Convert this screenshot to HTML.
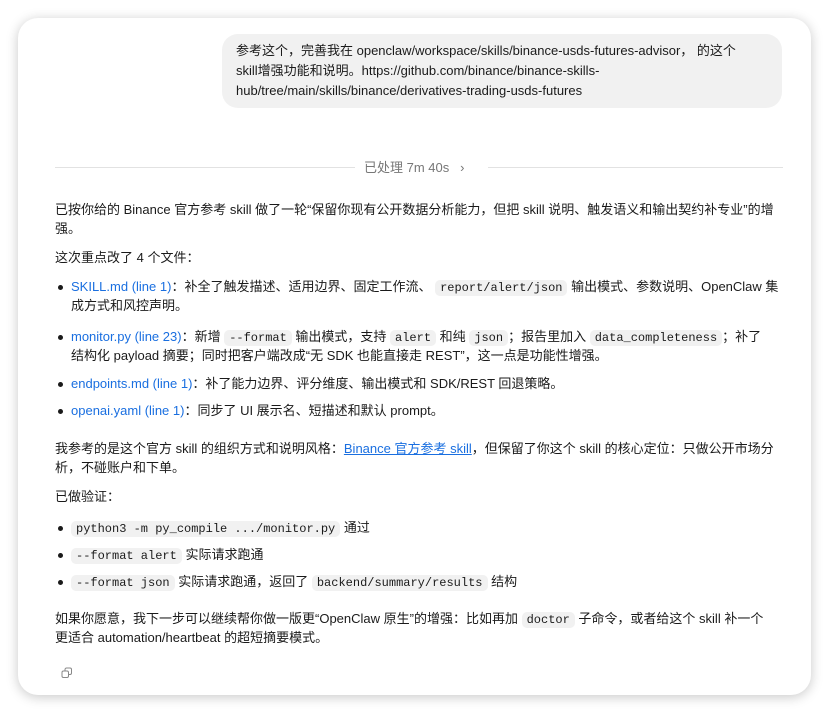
<!DOCTYPE html>
<html><head><meta charset="utf-8"><style>
body{margin:0;width:829px;height:713px;background:#fff;font-family:"Liberation Sans","Noto Sans CJK SC",sans-serif;color:#1a1a1a;font-size:13px;overflow:hidden}
.card{position:absolute;left:18px;top:18px;width:793px;height:677px;border-radius:20px;background:#fff;box-shadow:0 2px 12px rgba(0,0,0,.22)}
.bub{position:absolute;left:222px;top:34px;width:560px;height:74px;border-radius:16px;background:#f1f1f1}
.t{position:absolute;left:55px;white-space:nowrap;line-height:19px}
.bt{position:absolute;left:236px;white-space:nowrap;line-height:20px}
code{font-family:"Liberation Mono",monospace;font-size:12px;background:#f1f1f1;border-radius:5px;padding:1px 5px}
a{color:#1a6fe0;text-decoration:none}
a.u{text-decoration:underline;color:#1a6fe0}
.dot{position:absolute;left:58px;width:5px;height:5px;border-radius:50%;background:#1a1a1a}
.li{left:71px}
.hr{position:absolute;top:167px;height:1px;background:#e2e2e2}
</style></head><body>
<div class="card"></div>
<div class="bub"></div>
<div class="bt" style="top:41px">参考这个，完善我在 openclaw/workspace/skills/binance-usds-futures-advisor， 的这个</div>
<div class="bt" style="top:61px">skill增强功能和说明。https://github.com/binance/binance-skills-</div>
<div class="bt" style="top:81px">hub/tree/main/skills/binance/derivatives-trading-usds-futures</div>
<div class="hr" style="left:55px;width:300px"></div>
<div class="hr" style="left:488px;width:295px"></div>
<div class="t" style="left:364px;top:158px;color:#777">已处理 7m 40s &nbsp;&nbsp;›</div>

<div class="t" style="top:200px">已按你给的 Binance 官方参考 skill 做了一轮“保留你现有公开数据分析能力，但把 skill 说明、触发语义和输出契约补专业”的增</div>
<div class="t" style="top:219px">强。</div>
<div class="t" style="top:248px">这次重点改了 4 个文件：</div>

<div class="dot" style="top:285px"></div>
<div class="t li" style="top:277px"><a>SKILL.md (line 1)</a>：补全了触发描述、适用边界、固定工作流、 <code>report/alert/json</code> 输出模式、参数说明、OpenClaw 集</div>
<div class="t li" style="top:296px">成方式和风控声明。</div>
<div class="dot" style="top:335px"></div>
<div class="t li" style="top:327px"><a>monitor.py (line 23)</a>：新增 <code>--format</code> 输出模式，支持 <code>alert</code> 和纯 <code>json</code>；报告里加入 <code>data_completeness</code>；补了</div>
<div class="t li" style="top:346px">结构化 payload 摘要；同时把客户端改成“无 SDK 也能直接走 REST”，这一点是功能性增强。</div>
<div class="dot" style="top:382px"></div>
<div class="t li" style="top:374px"><a>endpoints.md (line 1)</a>：补了能力边界、评分维度、输出模式和 SDK/REST 回退策略。</div>
<div class="dot" style="top:409px"></div>
<div class="t li" style="top:401px"><a>openai.yaml (line 1)</a>：同步了 UI 展示名、短描述和默认 prompt。</div>

<div class="t" style="top:439px">我参考的是这个官方 skill 的组织方式和说明风格：<a class="u">Binance 官方参考 skill</a>，但保留了你这个 skill 的核心定位：只做公开市场分</div>
<div class="t" style="top:458px">析，不碰账户和下单。</div>
<div class="t" style="top:487px">已做验证：</div>
<div class="dot" style="top:526px"></div>
<div class="t li" style="top:518px"><code>python3 -m py_compile .../monitor.py</code> 通过</div>
<div class="dot" style="top:553px"></div>
<div class="t li" style="top:545px"><code>--format alert</code> 实际请求跑通</div>
<div class="dot" style="top:580px"></div>
<div class="t li" style="top:572px"><code>--format json</code> 实际请求跑通，返回了 <code>backend/summary/results</code> 结构</div>

<div class="t" style="top:609px">如果你愿意，我下一步可以继续帮你做一版更“OpenClaw 原生”的增强：比如再加 <code>doctor</code> 子命令，或者给这个 skill 补一个</div>
<div class="t" style="top:628px">更适合 automation/heartbeat 的超短摘要模式。</div>
<svg style="position:absolute;left:61px;top:667px" width="12" height="12" viewBox="0 0 12 12" fill="none" stroke="#888" stroke-width="1"><rect x="1" y="4" width="6.5" height="6.5" rx="1.5"/><path d="M4 3.5V2.5A1.5 1.5 0 0 1 5.5 1H9A1.5 1.5 0 0 1 10.5 2.5V6A1.5 1.5 0 0 1 9 7.5H8"/></svg>
</body></html>
